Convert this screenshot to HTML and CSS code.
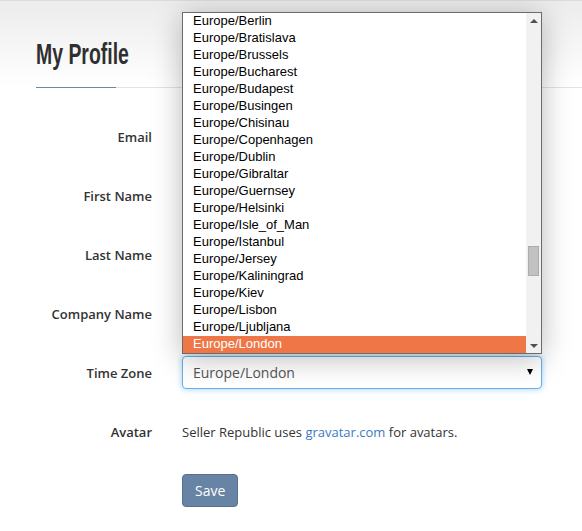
FILE: index.html
```html
<!DOCTYPE html>
<html lang="en">
<head>
<meta charset="UTF-8" />
<meta name="viewport" content="width=device-width, initial-scale=1" />
<title>My Profile — Seller Republic</title>
<link rel="stylesheet" href="styles.css">
</head>
<body>
  <header class="page-head">
    <h1>My Profile</h1>
    <div class="rule"><span class="rule-accent"></span></div>
  </header>

  <form class="profile">
    <div class="row">
      <label for="email">Email</label>
      <input class="field" type="text" id="email" />
    </div>
    <div class="row">
      <label for="first">First Name</label>
      <input class="field" type="text" id="first" />
    </div>
    <div class="row">
      <label for="last">Last Name</label>
      <input class="field" type="text" id="last" />
    </div>
    <div class="row">
      <label for="company">Company Name</label>
      <input class="field" type="text" id="company" />
    </div>
    <div class="row">
      <label>Time Zone</label>
      <div class="select">Europe/London<span class="caret"></span></div>
    </div>
    <div class="row">
      <label>Avatar</label>
      <p class="note">Seller Republic uses <a href="#">gravatar.com</a> for avatars.</p>
    </div>
    <div class="row">
      <span></span>
      <div><button type="button" class="btn-save">Save</button></div>
    </div>
  </form>

  <!-- open dropdown of the time zone select -->
  <div class="tz-popup">
    <ul class="tz-list">
      <li>Europe/Berlin</li>
      <li>Europe/Bratislava</li>
      <li>Europe/Brussels</li>
      <li>Europe/Bucharest</li>
      <li>Europe/Budapest</li>
      <li>Europe/Busingen</li>
      <li>Europe/Chisinau</li>
      <li>Europe/Copenhagen</li>
      <li>Europe/Dublin</li>
      <li>Europe/Gibraltar</li>
      <li>Europe/Guernsey</li>
      <li>Europe/Helsinki</li>
      <li>Europe/Isle_of_Man</li>
      <li>Europe/Istanbul</li>
      <li>Europe/Jersey</li>
      <li>Europe/Kaliningrad</li>
      <li>Europe/Kiev</li>
      <li>Europe/Lisbon</li>
      <li>Europe/Ljubljana</li>
      <li class="selected">Europe/London</li>
    </ul>
    <div class="scrollbar">
      <div class="sb-btn"><span class="arrow-up"></span></div>
      <div class="sb-track"><div class="sb-thumb"></div></div>
      <div class="sb-btn"><span class="arrow-down"></span></div>
    </div>
  </div>
</body>
</html>
```

FILE: styles.css
```css
body {
  margin: 0;
  background-color: #fff;
  color: #333;
  font-family: 'Open Sans', 'Liberation Sans', sans-serif;
  font-size: 13px;
}
.page-head {
  height: 88px;
  border-top: 1px solid #dcdcdc;
  box-sizing: border-box;
  background: linear-gradient(#ececec, #fff 86px);
}
.page-head h1 {
  margin: 0 0 0 36px;
  padding-top: 39px;
  height: 47px;
  box-sizing: content-box;
  font-family: 'Liberation Sans', Arial, sans-serif;
  font-size: 29px;
  line-height: 29px;
  font-weight: bold;
  color: #2f2f2f;
  display: inline-block;
  transform: scaleX(0.67);
  transform-origin: left top;
}
.rule {
  margin-left: 36px;
  height: 1px;
  background-color: #e3e3e3;
  display: flex;
}
.rule-accent {
  width: 80px;
  background-color: #6d87a1;
}
.profile {
  margin-top: 32px;
}
.row {
  display: grid;
  grid-template-columns: 152px 360px;
  column-gap: 30px;
  align-items: center;
  height: 34px;
  margin-bottom: 25px;
}
.row label {
  text-align: right;
  font-weight: 600;
  color: #333;
}
.field {
  height: 34px;
  box-sizing: border-box;
  border: 1px solid #ccc;
  border-radius: 4px;
}
.select {
  height: 33px;
  margin-top: -2px;
  box-sizing: border-box;
  border: 1px solid #66afe9;
  border-radius: 4px;
  box-shadow: 0 0 6px rgba(102, 175, 233, 0.6);
  padding: 0 10px;
  font-size: 14px;
  color: #555;
  display: flex;
  align-items: center;
  justify-content: space-between;
  background-color: #fff;
}
.caret {
  width: 0;
  height: 0;
  border-left: 3px solid transparent;
  border-right: 3px solid transparent;
  border-top: 6px solid #000;
  margin-right: -2px;
}
.note {
  margin: -1px 0 0;
  color: #333;
}
.note a {
  color: #3b7bbf;
  text-decoration: none;
}
.btn-save {
  background-color: #6784a4;
  color: #fff;
  border: 1px solid #56718f;
  border-radius: 4px;
  height: 33px;
  margin-top: -2px;
  padding: 0 12px;
  font-family: 'Open Sans', sans-serif;
  font-size: 14px;
  cursor: pointer;
}
.tz-popup {
  position: absolute;
  left: 182px;
  top: 12px;
  width: 360px;
  height: 342px;
  box-sizing: border-box;
  border: 1px solid #6b6b6b;
  background-color: #fff;
  box-shadow: 0 4px 28px rgba(0, 0, 0, 0.28);
  display: flex;
}
.tz-list {
  flex: 1;
  margin: 0;
  padding: 0;
  list-style: none;
  font-family: 'Liberation Sans', Arial, sans-serif;
  font-size: 13px;
  color: #000;
  overflow: hidden;
}
.tz-list li {
  height: 17px;
  line-height: 15px;
  padding-left: 10px;
  box-sizing: border-box;
}
.tz-list li.selected {
  background-color: #ef7747;
  color: #fff;
}
.scrollbar {
  width: 15px;
  background-color: #f1f1f1;
  display: flex;
  flex-direction: column;
}
.sb-btn {
  height: 15px;
  display: flex;
  justify-content: center;
  align-items: center;
}
.arrow-up {
  border-left: 4px solid transparent;
  border-right: 4px solid transparent;
  border-bottom: 4px solid #505050;
}
.arrow-down {
  border-left: 4px solid transparent;
  border-right: 4px solid transparent;
  border-top: 4px solid #505050;
}
.sb-track {
  flex: 1;
  padding-top: 218px;
}
.sb-thumb {
  margin: 0 2px;
  height: 30px;
  box-sizing: border-box;
  background-color: #c1c1c1;
  border: 1px solid #adadad;
}
```
